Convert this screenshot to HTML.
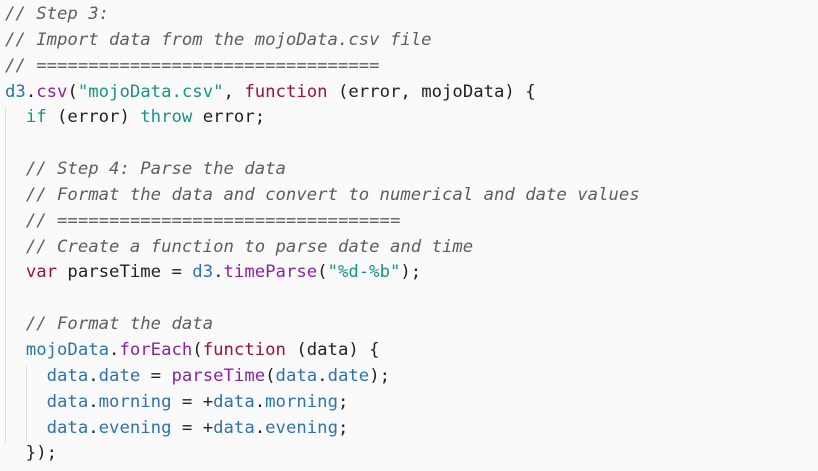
<!DOCTYPE html>
<html><head><meta charset="utf-8"><style>
html,body{margin:0;padding:0;background:#fafafa;width:818px;height:471px;overflow:hidden}
pre{margin:0;padding:2px 0 0 5px;font-family:"DejaVu Sans Mono","Liberation Mono",monospace;font-size:17.3px;line-height:25.85px;color:#222;position:relative}
.c{color:#5e5e5e;font-style:italic}
.b{color:#2e72b0}
.p{color:#8a22a4}
.s{color:#179485}
.k{color:#a00e44}
.t{color:#179485}
.g{position:absolute;width:1px;background:#dcdcdc}
</style></head><body>
<div class="g" style="left:5px;top:107px;height:336px"></div>
<div class="g" style="left:26px;top:366px;height:75px"></div>
<pre><span class="c">// Step 3:</span>
<span class="c">// Import data from the mojoData.csv file</span>
<span class="c">// =================================</span>
<span class="b">d3</span>.<span class="p">csv</span>(<span class="s">"mojoData.csv"</span>, <span class="k">function</span> (error, mojoData) {
  <span class="t">if</span> (error) <span class="t">throw</span> error;

  <span class="c">// Step 4: Parse the data</span>
  <span class="c">// Format the data and convert to numerical and date values</span>
  <span class="c">// =================================</span>
  <span class="c">// Create a function to parse date and time</span>
  <span class="k">var</span> parseTime = <span class="b">d3</span>.<span class="p">timeParse</span>(<span class="s">"%d-%b"</span>);

  <span class="c">// Format the data</span>
  <span class="b">mojoData</span>.<span class="p">forEach</span>(<span class="k">function</span> (data) {
    <span class="b">data</span>.<span class="b">date</span> = <span class="p">parseTime</span>(<span class="b">data</span>.<span class="b">date</span>);
    <span class="b">data</span>.<span class="b">morning</span> = +<span class="b">data</span>.<span class="b">morning</span>;
    <span class="b">data</span>.<span class="b">evening</span> = +<span class="b">data</span>.<span class="b">evening</span>;
  });</pre>
</body></html>
